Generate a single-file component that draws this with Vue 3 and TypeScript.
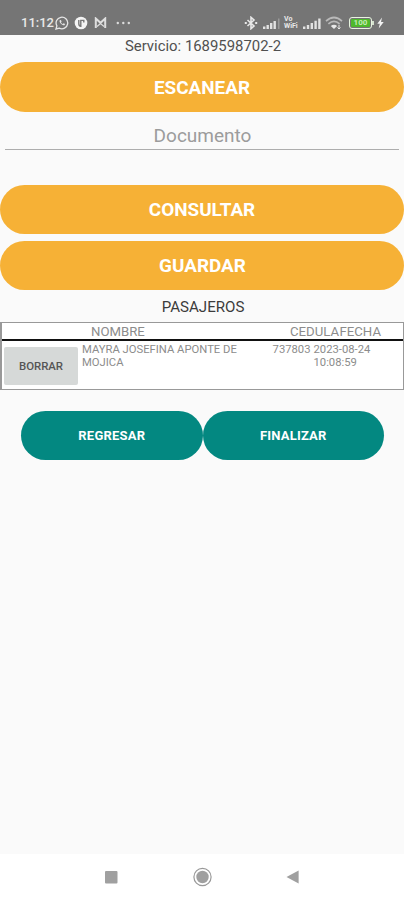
<script setup lang="ts">
import { ref } from 'vue'

interface Passenger {
  name: string
  cedula: string
  date: string
  time: string
}

const service = ref('1689598702-2')
const documentId = ref('')
const passengers = ref<Passenger[]>([
  { name: 'MAYRA JOSEFINA APONTE DE MOJICA', cedula: '737803', date: '2023-08-24', time: '10:08:59' },
])

function removePassenger(index: number): void {
  passengers.value.splice(index, 1)
}
</script>

<template>
  <div class="screen">
    <header class="status">
      <span class="clock">11:12</span>
      <svg class="whatsapp" width="14" height="14" viewBox="0 0 14 14" fill="none" stroke="#e6e6e6">
        <path d="M1 13l.9-3.1A5.8 5.8 0 1 1 4.2 12.100z" stroke-width="1.300" />
        <path d="M4.700 4.200c-.9 2.100 2.400 5.400 4.800 5.100l.6-1.200-1.500-.8-.8.7C6.700 7.500 6.200 6.800 6 6.200l.6-.7-.7-1.500z" fill="#e6e6e6" stroke="none" />
      </svg>
      <svg class="papp" width="14" height="14" viewBox="0 0 14 14">
        <circle cx="7" cy="7" r="6.300" fill="#f4f4f4" />
        <path d="M4.800 4v3.500q0 2.500 2 2.800V4.400h3v2" fill="none" stroke="#777" stroke-width="1.400" />
      </svg>
      <svg class="mail" width="13" height="12" viewBox="0 0 13 12" fill="none" stroke="#dedede">
        <path d="M1.800 11V1.500l4.700 4.300 4.700-4.300V11" stroke-width="2" />
        <path d="M3 9.500l3.500-3L10 9.500" stroke-width="1.200" />
      </svg>
      <svg class="more" width="15" height="4" viewBox="0 0 15 4" fill="#dcdcdc">
        <circle cx="1.800" cy="2" r="1.200" /><circle cx="7.300" cy="2" r="1.200" /><circle cx="12.800" cy="2" r="1.200" />
      </svg>
      <span class="spacer"></span>
      <svg class="bluetooth" width="14" height="14" viewBox="0 0 14 14" fill="none" stroke="#e8e8e8">
        <path d="M3.500 4l6.500 6-3 2.700V1.300L10 4l-6.500 6" stroke-width="1.600" />
        <path d="M.8 7h2M11.200 7h2" stroke-width="2" />
      </svg>
      <svg class="signal" width="18" height="11" viewBox="0 0 18 11" fill="#e2e2e2">
        <path d="M0 8.500h2.400V11H0zM3.500 7h2.400v4H3.500zM7 5h2.400v6H7zM10.500 3h2.400v8h-2.400z" />
        <path d="M15 .5h1.500V11H15z" fill="#999" />
      </svg>
      <span class="vowifi">Vo<br />WiFi</span>
      <svg class="signal" width="18" height="11" viewBox="0 0 18 11" fill="#e2e2e2">
        <path d="M0 8.500h2.400V11H0zM3.800 7h2.400v4H3.800zM7.600 5H10v6H7.600zM11.400 2.800h2.400V11h-2.400zM15.200.5h2.400V11h-2.400z" />
      </svg>
      <svg class="wifi" width="18" height="14" viewBox="0 0 18 14" fill="none" stroke="#b9b9b9" stroke-width="1.700">
        <path d="M1 5.200q8-7.400 16 0M3.400 7.800q5.600-5 11.200 0" />
        <path d="M5.800 10q3.200-2.600 6.300 0L9 13z" fill="#e8e8e8" stroke="none" />
        <path d="M14 8.800v4M12.500 11.500l1.500 1.500 1.500-1.500" stroke="#e8e8e8" stroke-width="1" />
      </svg>
      <span class="battery"><span class="charge">100</span></span>
      <svg class="bolt" width="7" height="12" viewBox="0 0 7 12" fill="#f3f3f3">
        <path d="M5 .5L.3 6.800h2.500L1.700 11.500 6.700 5H4z" />
      </svg>
    </header>

    <main class="content">
      <p class="service">Servicio: {{ service }}</p>
      <button class="pill">ESCANEAR</button>
      <input v-model="documentId" class="document" type="text" placeholder="Documento" />
      <button class="pill consult">CONSULTAR</button>
      <button class="pill save">GUARDAR</button>

      <h1 class="title">PASAJEROS</h1>
      <section class="table">
        <div class="row head">
          <span class="head-name">NOMBRE</span>
          <span class="head-cedula">CEDULA</span>
          <span class="head-date">FECHA</span>
        </div>
        <div v-for="(p, i) in passengers" :key="p.cedula" class="row entry">
          <button class="remove" @click="removePassenger(i)">BORRAR</button>
          <span class="name">{{ p.name }}</span>
          <span class="cedula">{{ p.cedula }}</span>
          <span class="date">{{ p.date }}<br />{{ p.time }}</span>
        </div>
      </section>

      <div class="actions">
        <button class="action">REGRESAR</button>
        <button class="action">FINALIZAR</button>
      </div>
    </main>

    <nav class="navbar">
      <svg width="14" height="14" viewBox="0 0 14 14"><rect x="1" y="1" width="12.500" height="12.500" rx="1" fill="#a0a0a0" /></svg>
      <svg width="20" height="20" viewBox="0 0 20 20">
        <circle cx="10.500" cy="10" r="8.600" fill="none" stroke="#999" stroke-width="1.200" />
        <circle cx="10.500" cy="10" r="6.200" fill="#a0a0a0" />
      </svg>
      <svg width="14" height="14" viewBox="0 0 14 14"><path d="M.5 7L12.600.6v12.800z" fill="#a0a0a0" /></svg>
    </nav>
  </div>
</template>

<style>
body {
  margin: 0;
  background: #fafafa;
}
</style>

<style scoped>
.screen {
  display: flex;
  flex-direction: column;
  box-sizing: border-box;
  width: 404px;
  height: 900px;
  overflow: hidden;
  background: #fafafa;
  font-family: Roboto, "Liberation Sans", sans-serif;
}
button {
  padding: 0;
  border: 0;
  font-family: inherit;
}
.status {
  display: flex;
  flex: none;
  align-items: center;
  box-sizing: border-box;
  height: 35px;
  padding: 11px 20px 0 21px;
  background: #757575;
  color: #e8e8e8;
}
.status svg {
  flex: none;
}
.clock {
  width: 34px;
  font-size: 13px;
  font-weight: 500;
  line-height: 14px;
}
.papp {
  margin-left: 5px;
}
.mail {
  margin-left: 6px;
}
.more {
  margin-left: 9px;
}
.spacer {
  flex: 1;
}
.bluetooth {
  margin-right: 5px;
}
.vowifi {
  width: 17px;
  margin: 0 2px 0 3px;
  font-size: 7px;
  font-weight: 700;
  line-height: 7px;
}
.wifi {
  margin-left: 4px;
}
.battery {
  position: relative;
  box-sizing: border-box;
  width: 23px;
  height: 12px;
  margin: 0 5px 0 6px;
  padding: 1px;
  border: 1px solid #e8f5e0;
  border-radius: 3px;
}
.battery::after {
  content: "";
  position: absolute;
  top: 3px;
  right: -3px;
  width: 2px;
  height: 4px;
  background: #d5e2ce;
}
.charge {
  display: block;
  height: 8px;
  border-radius: 1px;
  background: #4eb92c;
  color: #c4ecb4;
  font-size: 8px;
  font-weight: 700;
  line-height: 8px;
  text-align: center;
}
.content {
  display: flex;
  flex: 1;
  flex-direction: column;
}
.service {
  margin: 0 0 0 2px;
  height: 27px;
  color: #505050;
  font-size: 14.900px;
  line-height: 22px;
  text-align: center;
}
.pill {
  flex: none;
  height: 49.500px;
  border-radius: 25px;
  background: #f6b136;
  color: #fff;
  font-size: 18.900px;
  font-weight: 700;
  line-height: 51px;
}
.document {
  box-sizing: border-box;
  height: 26px;
  margin: 12.500px 5px 0;
  padding: 0 0 2px 1px;
  border: 0;
  border-bottom: 1.500px solid #adadad;
  outline: 0;
  background: transparent;
  color: #505050;
  font-family: inherit;
  font-size: 19px;
  font-weight: 400;
  text-align: center;
}
.document::placeholder {
  color: #9c9c9c;
  opacity: 1;
}
.consult {
  margin-top: 34.500px;
  line-height: 50px;
}
.save {
  margin-top: 6.500px;
  padding-left: 1px;
  line-height: 50px;
}
.title {
  height: 32px;
  margin: 0 0 0 2px;
  color: #3c3c3c;
  font-size: 15.100px;
  font-weight: 400;
  line-height: 35px;
  text-align: center;
}
.table {
  box-sizing: border-box;
  height: 68px;
  border: 1.500px solid #999;
  border-left-width: 2px;
  background: #fff;
  color: #8c8c8c;
}
.row {
  display: grid;
}
.head {
  grid-template-columns: 89px 199px 49.500px 1fr;
  height: 16px;
  border-bottom: 2px solid #111;
  font-size: 13.200px;
  line-height: 18px;
}
.head-name {
  grid-column: 2;
}
.entry {
  grid-template-columns: 74px 166px 69.500px 1fr;
  padding-left: 2px;
  font-size: 11.250px;
  line-height: 13px;
}
.remove {
  height: 38px;
  margin-top: 6px;
  border-radius: 2px;
  background: #d6d9d8;
  color: #555;
  font-size: 11.400px;
  font-weight: 500;
}
.name {
  padding: 1.500px 0 0 4px;
}
.cedula {
  padding: 1.500px 3px 0 0;
  text-align: right;
}
.date {
  padding-top: 1.500px;
  white-space: nowrap;
}
.actions {
  display: flex;
  margin: 21px 20px 0 21px;
}
.action {
  flex: 1;
  height: 49px;
  border-radius: 25px;
  background: #038881;
  color: #fff;
  font-size: 13px;
  font-weight: 700;
  letter-spacing: 0.200px;
  line-height: 50px;
}
.navbar {
  display: flex;
  flex: none;
  align-items: center;
  justify-content: space-between;
  box-sizing: border-box;
  height: 46px;
  padding: 0 104px 1px;
  background: #fff;
}
</style>
